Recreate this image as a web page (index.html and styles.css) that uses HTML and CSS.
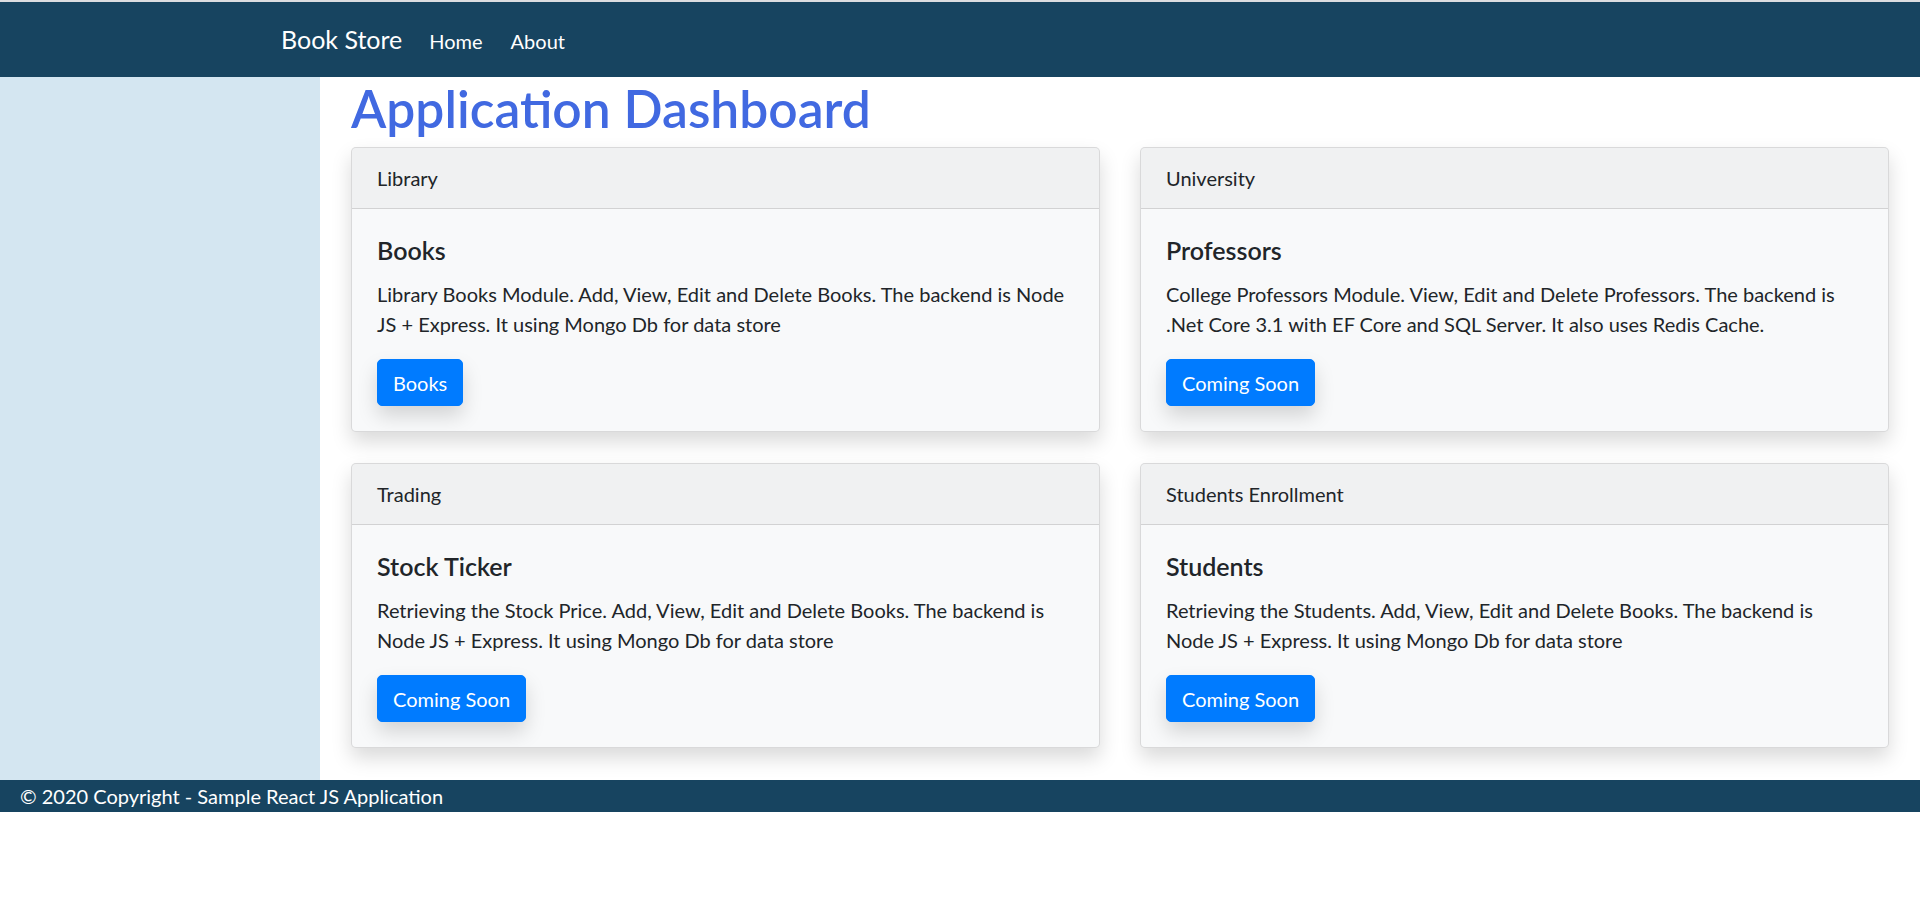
FILE: index.html
```html
<!DOCTYPE html>
<html lang="en">
<head>
<meta charset="utf-8">
<title>Book Store</title>
<link rel="stylesheet" href="styles.css">
</head>
<body>
<div class="topline"></div>
<header class="navbar">
  <a class="brand" href="#">Book Store</a>
  <nav class="nav">
    <a class="nav-link" href="#">Home</a>
    <a class="nav-link" href="#">About</a>
  </nav>
</header>
<div class="layout">
  <aside class="sidebar"></aside>
  <main class="main">
    <h1 class="page-title">Application Dashboard</h1>
    <div class="cards">
      <section class="card">
        <div class="card-header">Library</div>
        <div class="card-body">
          <h5 class="card-title">Books</h5>
          <p class="card-text">Library Books Module. Add, View, Edit and Delete Books. The backend is Node JS + Express. It using Mongo Db for data store</p>
          <a class="btn" href="#">Books</a>
        </div>
      </section>
      <section class="card">
        <div class="card-header">University</div>
        <div class="card-body">
          <h5 class="card-title">Professors</h5>
          <p class="card-text">College Professors Module. View, Edit and Delete Professors. The backend is .Net Core 3.1 with EF Core and SQL Server. It also uses Redis Cache.</p>
          <a class="btn" href="#">Coming Soon</a>
        </div>
      </section>
      <section class="card">
        <div class="card-header">Trading</div>
        <div class="card-body">
          <h5 class="card-title">Stock Ticker</h5>
          <p class="card-text">Retrieving the Stock Price. Add, View, Edit and Delete Books. The backend is Node JS + Express. It using Mongo Db for data store</p>
          <a class="btn" href="#">Coming Soon</a>
        </div>
      </section>
      <section class="card">
        <div class="card-header">Students Enrollment</div>
        <div class="card-body">
          <h5 class="card-title">Students</h5>
          <p class="card-text">Retrieving the Students. Add, View, Edit and Delete Books. The backend is Node JS + Express. It using Mongo Db for data store</p>
          <a class="btn" href="#">Coming Soon</a>
        </div>
      </section>
    </div>
  </main>
</div>
<footer class="footer">© 2020 Copyright - Sample React JS Application</footer>
</body>
</html>
```
FILE: styles.css
```css
* { box-sizing: border-box; }
html, body { margin: 0; padding: 0; }
body {
  font-family: Lato, "Liberation Sans", sans-serif;
  font-size: 20px;
  line-height: 1.5;
  color: #212529;
  background: #ffffff;
}
a { text-decoration: none; }

.topline { height: 2px; background: #dcdde0; }

.navbar {
  height: 75px;
  background: #174460;
  display: flex;
  align-items: baseline;
  padding: 19px 0 0 281px;
}
.brand {
  color: #ffffff;
  font-size: 25px;
  line-height: 37.5px;
  margin-right: 27px;
}
.nav { display: flex; gap: 28px; align-items: baseline; }
.nav-link {
  color: #ffffff;
  font-size: 20px;
  line-height: 30px;
}

.layout { display: flex; }
.sidebar { width: 320px; flex: 0 0 320px; background: #d4e6f1; }
.main { flex: 1; padding: 0 31px 32px 31px; }

.page-title {
  margin: 0 0 8px;
  font-size: 51.5px;
  line-height: 62px;
  font-weight: 600;
  color: #4169e1;
}

.cards {
  display: grid;
  grid-template-columns: 1fr 1fr;
  column-gap: 40px;
  row-gap: 31px;
}
.card {
  background: #f8f9fa;
  border: 1px solid rgba(0, 0, 0, 0.125);
  border-radius: 5px;
  box-shadow: 0 10px 20px rgba(0, 0, 0, 0.15);
  overflow: hidden;
}
.card-header {
  padding: 15px 25px;
  background: rgba(0, 0, 0, 0.03);
  border-bottom: 1px solid rgba(0, 0, 0, 0.125);
  line-height: 30px;
}
.card-body { padding: 26px 25px 25px; }
.card-title {
  margin: 0 0 14px;
  font-size: 25px;
  line-height: 30px;
  font-weight: 600;
  color: #212529;
}
.card-text { margin: 0 0 20px; line-height: 30px; }
.btn {
  display: inline-block;
  vertical-align: top;
  padding: 7.5px 15px;
  font-size: 20px;
  line-height: 30px;
  color: #ffffff;
  background: #007bff;
  border: 1px solid #007bff;
  border-radius: 5px;
  box-shadow: 0 10px 20px rgba(0, 0, 0, 0.15);
}

.footer {
  background: #174460;
  color: #ffffff;
  height: 32px;
  padding-left: 20px;
  font-size: 20px;
  line-height: 32px;
}
```
